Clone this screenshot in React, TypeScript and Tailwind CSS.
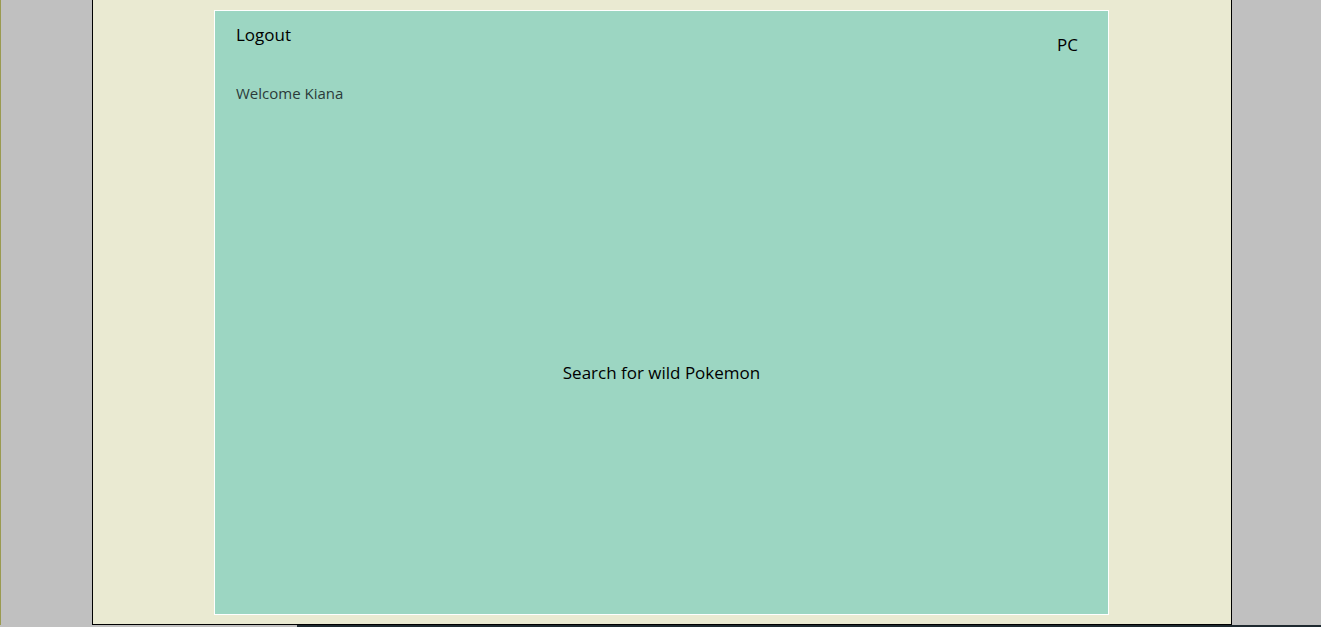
export default function App() {
  return (
    <div
      className="h-[627px] flex flex-col bg-[#c0c0c0] overflow-hidden"
      style={{ fontFamily: '"Open Sans", "Noto Sans", sans-serif' }}
    >
      <div className="h-[625px] flex border-l border-[#9a9a50]">
        <div className="ml-[91px] w-[1140px] h-[625px] bg-[#eaead2] border-x border-b border-black pt-[10px]">
          <div className="ml-[121px] w-[895px] h-[605px] bg-[#9cd6c2] border border-white flex flex-col">
            <div className="flex justify-between pl-[21px] pr-[30px]">
              <div className="flex flex-col">
                <button className="text-left text-[17px] text-black mt-[12px] leading-[24px]">
                  Logout
                </button>
                <p className="text-[15px] text-[#2b3b3a] mt-[36px] leading-[20px]">
                  Welcome Kiana
                </p>
              </div>
              <button className="text-[17px] text-black mt-[22px] leading-[24px] self-start">
                PC
              </button>
            </div>
            <div className="flex justify-center mt-[258px]">
              <button className="text-[17px] text-black leading-[24px]">
                Search for wild Pokemon
              </button>
            </div>
          </div>
        </div>
      </div>
      <div className="h-[2px] flex">
        <div className="w-[297px] bg-[#c0c0c0]" />
        <div className="flex-1 bg-[#1e2a30]" />
      </div>
    </div>
  );
}
